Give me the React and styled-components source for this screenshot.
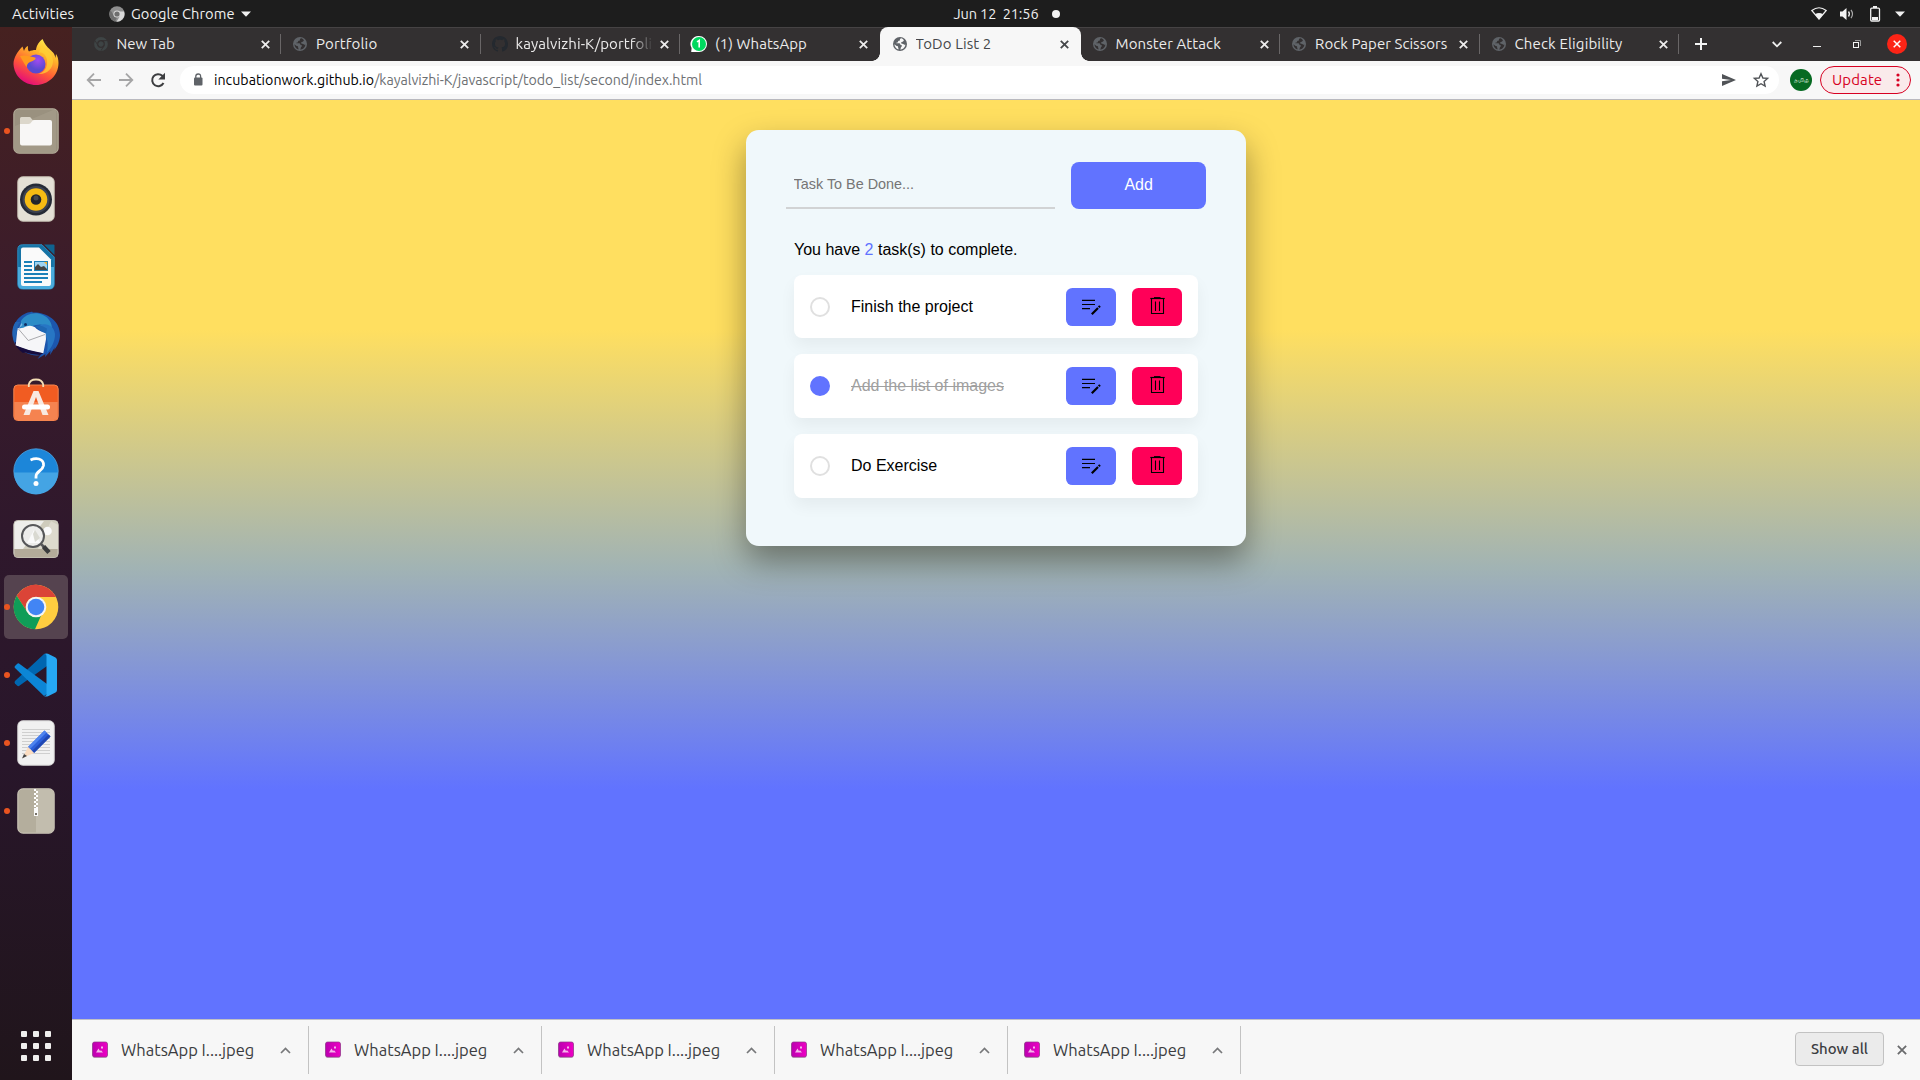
import React from "react";
import styled, { createGlobalStyle } from "styled-components";

const UI = `Ubuntu, "Noto Sans", "Open Sans", sans-serif`;

const Global = createGlobalStyle`
  *, *::before, *::after { box-sizing: border-box; }
  html, body { margin: 0; padding: 0; }
  body { width: 1920px; height: 1080px; overflow: hidden; font-family: ${UI}; }
  svg { display: block; flex: none; overflow: visible; }
`;

const Desktop = styled.div`
  width: 1920px;
  height: 1080px;
  display: flex;
  flex-direction: column;
  background: #1d1d1d;
`;

const Text = styled.span`
  font-family: ${UI};
  font-size: ${(p) => p.$size || 15}px;
  letter-spacing: ${(p) => p.$track || 0}px;
  color: ${(p) => p.$color || "inherit"};
  font-weight: ${(p) => p.$weight || 400};
  white-space: pre;
  line-height: 20px;
`;

/* ---------- system bar ---------- */
const TopBar = styled.header`
  height: 27px;
  flex: none;
  display: grid;
  grid-template-columns: 1fr auto 1fr;
  align-items: center;
  padding: 0 13px 0 12px;
  color: #f0f0f0;
`;
const TopLeft = styled.div`
  display: flex;
  align-items: center;
`;
const AppMenu = styled.div`
  display: flex;
  align-items: center;
  gap: 6px;
  margin-left: 35px;
`;
const Clock = styled.div`
  display: flex;
  align-items: center;
  gap: 13px;
  margin-left: 94px;
`;
const Dot = styled.i`
  width: 8px;
  height: 8px;
  border-radius: 50%;
  background: #f2f2f2;
`;
const Tray = styled.div`
  display: flex;
  align-items: center;
  justify-content: flex-end;
  gap: 12px;
  padding-right: 2px;
`;

const Body = styled.div`
  flex: 1;
  display: flex;
  min-height: 0;
`;

/* ---------- dock ---------- */
const Dock = styled.nav`
  width: 72px;
  flex: none;
  padding: 2px 0 12px;
  display: flex;
  flex-direction: column;
  background: linear-gradient(#462120 0, #3b1c2b 25%, #2f182c 48%, #28162a 70%, #20151b 100%);
`;
const DockItem = styled.div`
  height: 68px;
  display: grid;
  grid-template-columns: 4px 64px 4px;
  align-items: center;
  position: relative;
  &::before {
    content: "";
    position: absolute;
    left: 4px;
    top: 31px;
    width: 6px;
    height: 6px;
    border-radius: 50%;
    background: ${(p) => (p.$running ? "#e95420" : "transparent")};
  }
`;
const DockTile = styled.div`
  grid-column: 2;
  height: 64px;
  border-radius: 5px;
  display: flex;
  align-items: center;
  justify-content: center;
  background: ${(p) => (p.$active ? "#55434f" : "transparent")};
`;
const AppGrid = styled.div`
  margin: auto auto 7px;
  display: grid;
  grid-template-columns: repeat(3, 6px);
  grid-auto-rows: 6px;
  gap: 6px;
  i { background: #f0efee; border-radius: 1px; }
`;

/* ---------- browser ---------- */
const Browser = styled.main`
  flex: 1;
  display: flex;
  flex-direction: column;
  min-width: 0;
`;
const TabStrip = styled.div`
  height: 34px;
  flex: none;
  display: flex;
  align-items: center;
  background: #333031;
  box-shadow: inset 0 1px #464344;
  padding: 0 3px 0 9.5px;
  color: #ecebeb;
`;
const Tab = styled.div`
  width: 199.5px;
  height: 34px;
  flex: none;
  display: flex;
  align-items: center;
  padding: 0 11.5px 0 11px;
  position: relative;
  ${(p) => p.$divider && `
    background: linear-gradient(#696667, #696667) right center / 1px 20px no-repeat;
  `}
  ${(p) => p.$active && `
    background: #f7f7f7;
    color: #45474a;
    border-radius: 8px 8px 0 0;
    width: 201px;
    padding-left: 12px;
    &::before, &::after {
      content: "";
      position: absolute;
      bottom: 0;
      width: 8px;
      height: 8px;
    }
    &::before { left: -8px; background: radial-gradient(circle at 0 0, transparent 7.5px, #f7f7f7 8px); }
    &::after { right: -8px; background: radial-gradient(circle at 100% 0, transparent 7.5px, #f7f7f7 8px); }
  `}
`;
const TabTitle = styled.div`
  flex: 1;
  min-width: 0;
  overflow: hidden;
  margin: 0 5px 0 8px;
  line-height: 20px;
  display: flex;
  ${(p) => p.$fade && `
    -webkit-mask-image: linear-gradient(90deg, #000 115px, transparent 137px);
    mask-image: linear-gradient(90deg, #000 115px, transparent 137px);
  `}
`;
const PlusSlot = styled.div`
  width: 44px;
  display: flex;
  justify-content: center;
`;
const WindowButtons = styled.div`
  margin-left: auto;
  display: grid;
  grid-template-columns: repeat(4, 40px);
  justify-items: center;
  align-items: center;
`;
const CloseWindow = styled.div`
  width: 20px;
  height: 20px;
  border-radius: 50%;
  background: #fc2416;
  display: flex;
  align-items: center;
  justify-content: center;
`;

const Toolbar = styled.div`
  height: 39px;
  flex: none;
  display: flex;
  align-items: center;
  background: #f7f7f7;
  border-bottom: 1px solid #b9b9bf;
  padding: 0 9px 0 13px;
`;
const NavButtons = styled.div`
  display: flex;
  gap: 14px;
  margin-right: 13px;
`;
const Omnibox = styled.div`
  width: 1599px;
  height: 28px;
  border-radius: 14px;
  background: #fff;
  display: flex;
  align-items: center;
  padding: 0 9px 0 9px;
`;
const Address = styled.div`
  margin-left: 7px;
  flex: 1;
  display: flex;
`;
const OmniActions = styled.div`
  display: flex;
  gap: 14px;
`;
const Avatar = styled.div`
  width: 22px;
  height: 22px;
  border-radius: 50%;
  background: #066a22;
  margin: 0 8px 0 11px;
  display: flex;
  align-items: center;
  justify-content: center;
`;
const UpdatePill = styled.div`
  width: 91px;
  height: 28px;
  border-radius: 14px;
  border: 1px solid #d70022;
  background: #faeaeb;
  color: #d70022;
  display: flex;
  align-items: center;
  justify-content: space-between;
  padding: 0 10px 0 11px;
`;

/* ---------- todo page ---------- */
const Page = styled.section`
  flex: 1;
  min-height: 0;
  padding-top: 30px;
  display: flex;
  justify-content: center;
  align-items: flex-start;
  background: linear-gradient(#ffdf60 25%, #a1b3b4 51%, #6173ff 75%);
  font-family: "Liberation Sans", Arial, sans-serif;
`;
const Card = styled.div`
  width: 500px;
  height: 416px;
  padding: 32px 40px;
  background: #f0f8fb;
  border-radius: 12.8px;
  box-shadow: 0 15px 32px rgba(0, 0, 0, 0.38);
`;
const NewTask = styled.div`
  display: grid;
  grid-template-columns: 8fr 4fr;
  gap: 16px;
  height: 47px;
`;
const Field = styled.input`
  font: 14.4px "Liberation Sans", Arial, sans-serif;
  min-width: 0;
  background: transparent;
  border: 0;
  border-bottom: 2px solid #d1d3d4;
  border-radius: 0;
  outline: none;
  padding: 0 7.6px 1px;
  &::placeholder { color: #757575; opacity: 1; }
`;
const AddButton = styled.button`
  font: 16px "Liberation Sans", Arial, sans-serif;
  border: 0;
  border-radius: 8px;
  background: #6173ff;
  color: #fff;
  padding: 0 0 1px;
`;
const Tasks = styled.div`
  padding: 0 8px;
  margin-top: 32px;
`;
const Count = styled.p`
  margin: 0 0 15.8px;
  font-size: 16px;
  line-height: 18px;
  b { font-weight: 400; color: #6173ff; }
`;
const TaskRow = styled.div`
  height: 63.6px;
  margin-bottom: 16px;
  padding: 0 16px;
  display: grid;
  grid-template-columns: 20px 1fr 50px 50px;
  column-gap: 16px;
  align-items: center;
  background: #fff;
  border-radius: 8px;
  box-shadow: 0 8px 16px rgba(0, 0, 0, 0.05);
`;
const Check = styled.span`
  width: 20px;
  height: 20px;
  border-radius: 50%;
  border: 2px solid ${(p) => (p.$done ? "#6173ff" : "#e0e0e0")};
  background: ${(p) => (p.$done ? "#6173ff" : "transparent")};
`;
const TaskName = styled.span`
  font-size: 16px;
  line-height: 18px;
  margin-left: 5px;
  padding-top: 0.2px;
  color: ${(p) => (p.$done ? "#a0a0a0" : "#000")};
  text-decoration: ${(p) => (p.$done ? "line-through" : "none")};
`;
const RowButton = styled.button`
  height: 38px;
  border: 0;
  padding: 0 0 2px;
  border-radius: 6.4px;
  display: flex;
  align-items: center;
  justify-content: center;
  background: ${(p) => (p.$danger ? "#ff0058" : "#6173ff")};
`;

/* ---------- downloads ---------- */
const Shelf = styled.footer`
  height: 61px;
  flex: none;
  display: flex;
  align-items: center;
  background: #f7f7f7;
  border-top: 1px solid #c1c1c6;
  padding: 0 13px 0 4px;
  color: #3b3c40;
`;
const Download = styled.div`
  width: 233px;
  height: 48px;
  display: flex;
  align-items: center;
  padding: 0 17.5px 0 16px;
  border-right: 1px solid #c3c3c3;
`;
const FileName = styled.div`
  flex: 1;
  display: flex;
  margin-left: 13px;
`;
const ShowAll = styled.div`
  margin: 0 13px 2px auto;
  width: 89px;
  height: 34px;
  border: 1px solid #c2c2c2;
  border-radius: 4px;
  background: #ebebeb;
  display: flex;
  align-items: center;
  justify-content: center;
`;
const CloseShelf = styled.div`
  padding-bottom: 1px;
`;

/* ---------- icons ---------- */
const Cross = ({ s = 8, w = 2, color = "currentColor" }) => (
  <svg width={s} height={s} viewBox="0 0 8 8">
    <path d="M.7.7l6.6 6.6M7.3.7L.7 7.3" stroke={color} strokeWidth={(w * 8) / s} fill="none" />
  </svg>
);
const Caret = () => (
  <svg width="10" height="6" viewBox="0 0 10 6"><path d="M0 .5h10L5 5.7z" fill="#f0f0f0" /></svg>
);
const Globe = ({ dim }) => (
  <svg width="16" height="16" viewBox="0 0 16 16">
    <circle cx="8" cy="8" r="7" fill="#5f6368" />
    <path
      d="M9.3 2.3c-.9.3-1.5.7-1.4 1.4.3.7-.4 1-1.2 1.1-.8.2-.6 1-.9 1.4-.3.4-1.4.1-1.6.8.1.5 1.2.3 2.2.3 1.3 0 2 .5 2 1.4.2.7 1.3.1 1.5 1 .1.9-.8 1-1 1.7-.2.8-.2 1.5-.9 2.2 3 .1 5.2-2.1 5.4-5-.9.3-1.7.3-2-.5-.4-.7-1.4-.1-2-.7-.6-.8.1-1.5.9-1.7 1-.1.9-.8 1.6-1.3-.7-1.1-1.5-1.7-2.6-2.1zM2.4 8.3c.1 2.5 1.7 4.5 4 5.1.3-.8-.1-1.4-.3-2 .3-.8-.4-1.5-1.3-1.5-.8-.1-1.500-.8-2.400-1.600z"
      fill={dim ? "#333031" : "#f7f7f7"}
    />
  </svg>
);
const ChromeMono = ({ a = "#8f8f8f", b = "#d9d9d9", c = "#6e6e6e", size = 16 }) => (
  <svg width={size} height={size} viewBox="0 0 16 16">
    <circle cx="8" cy="8" r="7.800" fill={a} />
    <path d="M15 5.500H8l3 4.500-3.500 5.800A7.800 7.800 0 0 0 15 5.500z" fill={b} />
    <path d="M1.500 4L5 10l3 1.500-2 4A7.800 7.800 0 0 1 1.500 4z" fill={c} />
    <circle cx="8" cy="8" r="3.600" fill={b} />
    <circle cx="8" cy="8" r="2.600" fill={c} />
  </svg>
);
const DimChrome = () => (
  <svg width="16" height="16" viewBox="0 0 16 16" fill="none" stroke="#3e4445">
    <circle cx="8" cy="8" r="5.400" strokeWidth="3" />
    <circle cx="8" cy="8" r="2.200" fill="#3e4445" />
    <path d="M8 4.600h6M5 9.500L2 4.500M11 9.700l-3 5" stroke="#333031" strokeWidth=".9" />
  </svg>
);
const GitHub = () => (
  <svg width="16" height="16" viewBox="0 0 16 16">
    <path fill="#24292f" d="M8 0C3.580 0 0 3.580 0 8c0 3.540 2.290 6.530 5.470 7.590.4.070.55-.17.55-.38 0-.19-.01-.82-.01-1.490-2.010.37-2.530-.49-2.690-.94-.09-.23-.48-.94-.82-1.130-.28-.15-.68-.52-.01-.53.63-.01 1.080.58 1.230.82.72 1.210 1.870.87 2.330.66.070-.52.28-.87.51-1.070-1.780-.2-3.640-.89-3.640-3.950 0-.87.31-1.590.82-2.150-.08-.2-.36-1.020.08-2.120 0 0 .67-.21 2.200.82.64-.18 1.320-.27 2-.27s1.360.09 2 .27c1.530-1.040 2.200-.82 2.200-.82.44 1.100.16 1.920.08 2.120.51.56.82 1.270.82 2.150 0 3.070-1.870 3.750-3.650 3.950.29.25.54.73.54 1.480 0 1.070-.01 1.930-.01 2.200 0 .21.15.46.55.38A8.010 8.010 0 0 0 16 8c0-4.420-3.580-8-8-8z" />
  </svg>
);
const WhatsApp = () => (
  <svg width="16" height="16" viewBox="0 0 16 16">
    <path d="M8 0a8 8 0 0 1 0 16H.2L.6 12A8 8 0 0 1 8 0z" fill="#fff" />
    <circle cx="8" cy="8" r="7" fill="#00d95f" />
    <path d="M6 5.800l2.200-1.400V11.600" fill="none" stroke="#fff" strokeWidth="1.600" />
  </svg>
);

const dockIcons = {
  firefox: (
    <svg width="46" height="46" viewBox="0 1 46 46">
      <defs>
        <linearGradient id="ffa" x1=".8" y1="0" x2=".3" y2="1">
          <stop offset="0" stopColor="#fff44f" /><stop offset=".35" stopColor="#ffb02a" />
          <stop offset=".65" stopColor="#ff5a36" /><stop offset="1" stopColor="#e3077e" />
        </linearGradient>
        <radialGradient id="ffb" cx=".6" cy=".3"><stop offset="0" stopColor="#a14bf0" /><stop offset="1" stopColor="#5a4ad0" /></radialGradient>
      </defs>
      <path d="M29.500 0c-3 2.500-6 6-6.500 11-3 0-5 .5-7 1.500C14.500 11 15 8.500 15 7c-2 .8-3.500 3-4 5L9.500 7.500C5 12 .5 18.500.5 25 1 37 11 46 23 46s22.500-9.500 22.500-22c0-4-1-7-2.500-9l-.5 4c-1-5-3.500-6.500-6-9-2.500-2.300-5-5-7-10z" fill="url(#ffa)" />
      <circle cx="23" cy="25" r="9.500" fill="url(#ffb)" />
      <path d="M7 17c5-1.500 9 0 15 1.500 2 1.500-1 3-5 4.500-2.500 1-3 3-3.500 5C11 24 9 21 7 17z" fill="#ff9a1f" />
      <path d="M26 14c4-2 9 4 8 11-.5 5-4 9-9 10 8 1 15-5 15-13C40 12 30 12 29 5c-1 3-2 5-3 9z" fill="#ffd034" opacity=".75" />
    </svg>
  ),
  files: (
    <svg width="46" height="46" viewBox="0 0 46 46">
      <rect x=".8" y=".8" width="44.400" height="44.400" rx="5" fill="#9a917f" stroke="#b9b29f" strokeWidth="1" />
      <path d="M2 18L40 2h3v42H2z" fill="#aaa290" opacity=".5" />
      <path d="M7 10.500q0-1.500 1.500-1.500h8q1 0 1.500 1l1.500 2H24v8H7z" fill="#dcd7cb" />
      <path d="M7 16h8.500q2 0 3-2t3-2H37q2 0 2 2v21.500q0 2-2 2H9q-2 0-2-2z" fill="#f8f7f6" />
    </svg>
  ),
  music: (
    <svg width="38" height="46" viewBox="0 0 38 46">
      <rect x=".8" y=".8" width="36.400" height="44.400" rx="5" fill="#e4e0d6" stroke="#c9c4b6" />
      <circle cx="19" cy="23.500" r="16" fill="#252a36" /><circle cx="19" cy="23.500" r="13.500" fill="#3d4352" />
      <circle cx="19" cy="23.500" r="11.300" fill="#f6bb13" /><circle cx="19" cy="23.500" r="5.300" fill="#23252c" /><circle cx="19" cy="22" r="2.500" fill="#45484d" />
    </svg>
  ),
  writer: (
    <svg width="38" height="46" viewBox="0 0 38 46">
      <path d="M5.500.8H25L37.200 13v27q0 5-5 5H5.500q-4.700 0-4.700-5V5.500Q.8.8 5.500.8z" fill="#1673a5" stroke="#2b8cc0" />
      <path d="M1 23h36v17q0 5-5 5H6q-5 0-5-5z" fill="#4aabdc" />
      <path d="M27 .5h9.500q1 0 1 1V11z" fill="#0f638f" />
      <path d="M6 3.500h16L34 15.500V39q0 3-2 3H6q-2 0-2-2V5.500q0-2 2-2z" fill="#fafafa" />
      <path d="M7 18h8M7 22h8M7 26h8M7 30h24M7 34h24M7 38h18" stroke="#1b80b8" strokeWidth="2" />
      <rect x="17" y="17" width="14" height="10" fill="#1b80b8" /><rect x="18" y="18" width="12" height="8" fill="#9ed3f1" /><path d="M18 26v-3l3-3 3 3 3-1 3 3v1z" fill="#454545" /><path d="M27 18h3v3z" fill="#fbb32b" />
    </svg>
  ),
  mail: (
    <svg width="48" height="48" viewBox="0 0 48 48">
      <path d="M5 9C9 4 15 1 19 1c1-.8 2 0 1.500.5C34 1 48 9 48 24c0 6-3 12-6 15l1-3-5 8 .5-4L33 46l.5-3-8 5 3-4C20 46 8 40 3 33-1 26 0 16 5 9z" fill="#1c56ad" />
      <path d="M9 10C13 3 23 0 31 4c6 3 9 8 9 14-7-2-8-6-16-4-6 1-11 6-16 7z" fill="#2c8cc7" />
      <path d="M27 15c6-4 15-1 16 8 0 8-4 14-8 19 1-7 1-12-1-16z" fill="#2776c4" />
      <path d="M3.700 31Q9 38 14 41l-3 1Q5 38 3 32z" fill="#170c3c" />
      <path d="M5.500 17q5 1 8.500-1.500 5-2 9 .8 2 3 10.700 6l.3 6-2.700 14Q15 40 3.700 34.500z" fill="#f6f6f8" />
      <path d="M3.700 34.500Q17 40 31.300 42.300L28 44Q12 43 4.500 36z" fill="#170c3c" />
      <path d="M6.500 18l9.800 11.500L33 23.500" fill="none" stroke="#a9a9ad" strokeWidth="1" />
      <path d="M23 15q5 5 11 7.500l1-5q-6-4-12-2.500z" fill="#1f68b4" />
      <circle cx="13.500" cy="13.500" r="1.500" fill="#102e63" /><path d="M10.500 14l-4 4 3-6z" fill="#77b9e6" />
      <path d="M3.500 11C-1 17 0 26 2.500 31l3-13c-.5-3 1-5 3-7z" fill="#2265b5" />
    </svg>
  ),
  software: (
    <svg width="46" height="46" viewBox="0 3 46 46">
      <rect x=".8" y="8" width="44.400" height="35.500" rx="4" fill="#f15c22" stroke="#f5854f" />
      <path d="M1.300 25h43.400v14.500q0 3.500-4 3.500H5q-3.700 0-3.700-3.500z" fill="#f58350" />
      <path d="M15.800 10V7.500q1-5 7.200-5t7.200 5V10" fill="none" stroke="#f5deb5" strokeWidth="1.800" />
      <path d="M20.500 14h5L35.500 38h-6L23 20l-6.500 18h-6z" fill="#f8e9e1" /><rect x="9" y="27.500" width="28" height="5" rx="2.500" fill="#fff" />
    </svg>
  ),
  help: (
    <svg width="46" height="46" viewBox="0 0 46 46">
      <circle cx="23" cy="23" r="22.200" fill="#1c86d9" stroke="#4d9fdc" strokeWidth=".8" />
      <path d="M1 24.500h44A22 22 0 0 1 1 24.500z" fill="#44a4e4" />
      <path d="M17.500 12q4.500-2 8.500-1 5 1.500 4.500 6.500-.5 3-4 5.500-3.500 2.500-3.500 6v1.500" fill="none" stroke="#fff" strokeWidth="2.800" /><circle cx="23" cy="35.500" r="2.500" fill="#fff" />
    </svg>
  ),
  viewer: (
    <svg width="46" height="46" viewBox="0 0 46 46">
      <rect x=".8" y="4.500" width="44.400" height="37" rx="4" fill="#eeeeea" stroke="#c5c2b5" />
      <path d="M31 5h10q4 0 4 4v24H10z" fill="#cfccbc" /><path d="M38 5l7 4v24H25z" fill="#dddacd" />
      <path d="M1.300 33h43.400v5q0 3.200-4 3.200H5q-3.700 0-3.700-3.200z" fill="#b3ab99" />
      <circle cx="34.500" cy="15" r="4.300" fill="#fafafa" />
      <circle cx="20" cy="20" r="11" fill="#ededeb" stroke="#57585a" strokeWidth="2" /><path d="M14 27l7-13 6 13z" fill="#fafafa" /><path d="M20 18l2 8 5-4-5-8z" fill="#d9d9d1" />
      <path d="M28 28l3.500 3.500" stroke="#57585a" strokeWidth="2.500" /><path d="M30.500 30.500l5.500 6" stroke="#3a3b3d" strokeWidth="4.500" />
    </svg>
  ),
  chrome: (
    <svg width="46" height="46" viewBox="0 0 46 46">
      <circle cx="23" cy="23" r="22.300" fill="#ffcd40" />
      <path d="M3.700 11.800A22.300 22.300 0 0 1 43 13H23a10 10 0 0 0-8.700 15z" fill="#db4437" />
      <path d="M3.700 11.800L14.300 28A10 10 0 0 0 28 31.700L22 45.300A22.300 22.300 0 0 1 3.700 11.800z" fill="#0f9d58" />
      <circle cx="23" cy="23" r="10.300" fill="#f4f4f4" /><circle cx="23" cy="23" r="8.300" fill="#4285f4" />
    </svg>
  ),
  code: (
    <svg width="44" height="44" viewBox="0 0 44 44">
      <path d="M1 28L30 1h3v12L5 33q-1 .5-2-.5l-2-2q-1-1.300 0-2.500z" fill="#0066b0" />
      <path d="M1 15L30 43l3-2V31L5 10.500q-1-.5-2 .5l-2 2q-1 1 0 2z" fill="#0c86d6" />
      <path d="M30 1q2-1 4-.2L41.500 4.500q1.500 1 1.500 2.500v30q0 1.500-1.500 2.500L34 43.200q-2 .8-4-.2 2.500.5 2.500-2V3q0-2.500-2.500-2z" fill="#26a8f3" />
    </svg>
  ),
  editor: (
    <svg width="38" height="46" viewBox="0 0 38 46">
      <rect x=".8" y=".8" width="36.400" height="44.400" rx="5" fill="#f1f1f1" stroke="#d8d8d8" />
      <path d="M5 9.500h28M5 12.500h28M5 15.500h28M5 18.500h28M5 21.500h28M5 24.500h28M5 27.500h28M5 30.500h28M5 33.500h28" stroke="#cfcfcf" />
      <path d="M11 27L27.500 10.500l6 6L17 33z" fill="#2b5fd9" /><path d="M11 27L27.500 10.500l2 2L13 29z" fill="#4d83ef" /><path d="M15 31l16.500-16.500 2 2L17 33z" fill="#1f47b3" />
      <path d="M11 27l6 6-11.500 5z" fill="#fbdcc0" /><path d="M7 34l3 2-5 2.500z" fill="#444" />
    </svg>
  ),
  archive: (
    <svg width="38" height="46" viewBox="0 0 38 46">
      <rect x=".8" y=".8" width="36.400" height="44.400" rx="5" fill="#b4ae9d" stroke="#cfcabc" />
      <path d="M19 1.500h13q5 0 5 4.500v34q0 4.700-5 4.700H19z" fill="#c2bdae" />
      <path d="M18 1v20" stroke="#fff" strokeWidth="2" strokeDasharray="2 2" /><path d="M20 3v20" stroke="#fff" strokeWidth="2" strokeDasharray="2 2" />
      <rect x="17" y="20" width="4" height="8" fill="#fafafa" /><rect x="18" y="25" width="2" height="2" fill="#77736a" />
    </svg>
  ),
};

const dock = [
  ["firefox"], ["files", true], ["music"], ["writer"], ["mail"], ["software"], ["help"], ["viewer"],
  ["chrome", true, true], ["code", true], ["editor", true], ["archive", true],
];

const tabs = [
  { title: "New Tab", track: 0, icon: <DimChrome />, divider: true },
  { title: "Portfolio", track: 0.15, icon: <Globe dim />, divider: true },
  { title: "kayalvizhi-K/portfolio", track: 0.1, icon: <GitHub />, divider: true, fade: true },
  { title: "(1) WhatsApp", track: 0.06, icon: <WhatsApp /> },
  { title: "ToDo List 2", track: 0.1, icon: <Globe />, active: true },
  { title: "Monster Attack", track: 0.1, icon: <Globe dim />, divider: true },
  { title: "Rock Paper Scissors", track: 0.06, icon: <Globe dim />, divider: true },
  { title: "Check Eligibility", track: 0.15, icon: <Globe dim />, divider: true },
];

const tasks = [
  { name: "Finish the project" },
  { name: "Add the list of images", done: true },
  { name: "Do Exercise" },
];

const EditIcon = () => (
  <svg width="20" height="18" viewBox="0 0 20 18">
    <path d="M1 3.300H14M1 7.500H14M1 11.700h8" stroke="#000" strokeWidth="1.200" />
    <path d="M10.800 17.200L17 11" stroke="#000" strokeWidth="2.200" /><path d="M17.600 8.800l1.500 1.500" stroke="#000" strokeWidth="1.800" />
  </svg>
);
const TrashIcon = () => (
  <svg width="16" height="18" viewBox="0 0 16 18" fill="none" stroke="#000">
    <path d="M1.300 1.500h14.400" strokeWidth="1.200" /><path d="M5 .7h6.500" strokeWidth="1.200" />
    <path d="M2.500 2v14.500h12V2" strokeWidth="1.100" /><path d="M6.500 4.500v9.500M10.500 4.500v9.500" strokeWidth="1.100" />
  </svg>
);
const ImageFile = () => (
  <svg width="16" height="18" viewBox="0 0 16 18">
    <defs><linearGradient id="img"><stop offset="0" stopColor="#bb00b0" /><stop offset="1" stopColor="#ee00c4" /></linearGradient></defs>
    <rect x=".5" y="1.500" width="15" height="15.500" rx="2" fill="#c9b9c7" />
    <rect x=".5" y="1" width="15" height="15" rx="2" fill="url(#img)" stroke="#8d3687" strokeWidth=".7" />
    <path d="M4 11.500l2.500-4 1.500 2.500 1-.8 2 2.300z" fill="#f5b6ec" /><rect x="9" y="5.500" width="2" height="2" fill="#f5b6ec" />
  </svg>
);

export default function App() {
  return (
    <Desktop>
      <Global />
      <TopBar>
        <TopLeft>
          <Text $track={0.05}>Activities</Text>
          <AppMenu>
            <ChromeMono />
            <Text $size={14.67} $track={0.06}>Google Chrome</Text>
            <Caret />
          </AppMenu>
        </TopLeft>
        <Clock>
          <Text $size={14.5} $track={-0.1}>{"Jun 12  21:56"}</Text>
          <Dot />
        </Clock>
        <Tray>
          <svg width="16" height="13" viewBox="0 0 16 13">
            <path d="M.8 3.500Q8-2 15.200 3.500L8 12z" fill="none" stroke="#eee" strokeWidth="1.200" /><path d="M4 7.300q4-2.500 8 0L8 12.500z" fill="#f2f2f2" />
          </svg>
          <svg width="16" height="14" viewBox="0 0 16 14">
            <path d="M1 4.500h2.500L7.500 1v12L3.500 9.500H1z" fill="#f2f2f2" /><path d="M9.500 4.500q1.800 2.500 0 5" fill="none" stroke="#eee" strokeWidth="1.300" /><path d="M12 2.800q3 4.200 0 8.400" fill="none" stroke="#aaa" strokeWidth="1.200" />
          </svg>
          <svg width="16" height="16" viewBox="0 0 16 16">
            <rect x="3.700" y="2.200" width="8.800" height="12.800" rx="1" fill="none" stroke="#f2f2f2" strokeWidth="1.300" /><path d="M6 1h4" stroke="#f2f2f2" strokeWidth="2" /><rect x="5" y="11" width="6" height="3" fill="#f2f2f2" />
          </svg>
          <Caret />
        </Tray>
      </TopBar>
      <Body>
        <Dock>
          {dock.map(([name, running, active]) => (
            <DockItem key={name} $running={running}>
              <DockTile $active={active}>{dockIcons[name]}</DockTile>
            </DockItem>
          ))}
          <AppGrid>{Array.from({ length: 9 }, (_, i) => <i key={i} />)}</AppGrid>
        </Dock>
        <Browser>
          <TabStrip>
            {tabs.map((t) => (
              <Tab key={t.title} $active={t.active} $divider={t.divider}>
                {t.icon}
                <TabTitle $fade={t.fade}><Text $track={t.track}>{t.title}</Text></TabTitle>
                <Cross s={9} w={1.8} />
              </Tab>
            ))}
            <PlusSlot>
              <svg width="12" height="12" viewBox="0 0 12 12"><path d="M6 0v12M0 6h12" stroke="#f4f4f4" strokeWidth="2" /></svg>
            </PlusSlot>
            <WindowButtons>
              <svg width="10" height="7" viewBox="0 0 10 7"><path d="M.7 1L5 5.300 9.300 1" fill="none" stroke="#eee" strokeWidth="1.800" /></svg>
              <svg width="8" height="8" viewBox="0 0 8 8"><path d="M0 6.500h8" stroke="#eee" /></svg>
              <svg width="8" height="8" viewBox="0 0 8 8" fill="none"><path d="M2 .5h5.500V6" stroke="#999" /><rect x=".5" y="2.500" width="5" height="5" stroke="#f4f4f4" /></svg>
              <CloseWindow><Cross s={8} w={1.5} color="#fff" /></CloseWindow>
            </WindowButtons>
          </TabStrip>
          <Toolbar>
            <NavButtons>
              <svg width="18" height="18" viewBox="0 0 18 18" fill="none" stroke="#a5a5a6" strokeWidth="1.800"><path d="M16 9H3M9 2.700L2.700 9 9 15.300" /></svg>
              <svg width="18" height="18" viewBox="0 0 18 18" fill="none" stroke="#a5a5a6" strokeWidth="1.800"><path d="M2 9h13M9 2.700L15.300 9 9 15.300" /></svg>
              <svg width="18" height="18" viewBox="0 0 18 18"><path d="M14.500 12A6 6 0 1 1 13.300 4.800L15 6.500" fill="none" stroke="#3c3d40" strokeWidth="2" /><path d="M16 1.800v6.700H9.300z" fill="#3c3d40" /></svg>
            </NavButtons>
            <Omnibox>
              <svg width="18" height="16" viewBox="0 0 18 16"><rect x="5" y="5.500" width="8.500" height="8" rx="1" fill="#5f6368" /><path d="M6.800 6V4.300q0-2.300 2.400-2.300t2.400 2.300V6" fill="none" stroke="#5f6368" strokeWidth="1.300" /></svg>
              <Address>
                <Text $size={14.2} $track={0.03} $color="#000">incubationwork.github.io</Text>
                <Text $size={14.2} $track={-0.04} $color="#6d7073">/kayalvizhi-K/javascript/todo_list/second/index.html</Text>
              </Address>
              <OmniActions>
                <svg width="18" height="18" viewBox="0 0 18 18"><path d="M2 3l14 6-14 6v-4.800L11 9 2 7.800z" fill="#505357" /></svg>
                <svg width="18" height="18" viewBox="0 0 18 18"><path d="M9 2.700l1.900 4.300 4.700.4-3.500 3.100 1 4.600L9 12.700l-4.100 2.400 1-4.600L2.400 7.400l4.700-.4z" fill="none" stroke="#505357" strokeWidth="1.400" /></svg>
              </OmniActions>
            </Omnibox>
            <Avatar>
              <Text $size={6} $color="#e6f5e9">தமிழ்</Text>
            </Avatar>
            <UpdatePill>
              <Text $track={0.1}>Update</Text>
              <svg width="4" height="14" viewBox="0 0 4 14" fill="#d70022"><circle cx="2" cy="2" r="1.600" /><circle cx="2" cy="7" r="1.600" /><circle cx="2" cy="12" r="1.600" /></svg>
            </UpdatePill>
          </Toolbar>
          <Page>
            <Card>
              <NewTask>
                <Field placeholder="Task To Be Done..." />
                <AddButton>Add</AddButton>
              </NewTask>
              <Tasks>
                <Count>You have <b>2</b> task(s) to complete.</Count>
                {tasks.map((t) => (
                  <TaskRow key={t.name}>
                    <Check $done={t.done} />
                    <TaskName $done={t.done}>{t.name}</TaskName>
                    <RowButton><EditIcon /></RowButton>
                    <RowButton $danger><TrashIcon /></RowButton>
                  </TaskRow>
                ))}
              </Tasks>
            </Card>
          </Page>
          <Shelf>
            {[0, 1, 2, 3, 4].map((i) => (
              <Download key={i}>
                <ImageFile />
                <FileName><Text $size={16.5}>WhatsApp I....jpeg</Text></FileName>
                <svg width="11" height="7" viewBox="0 0 11 7"><path d="M1 6l4.500-4.500L10 6" fill="none" stroke="#77787a" strokeWidth="1.700" /></svg>
              </Download>
            ))}
            <ShowAll><Text $size={15} $weight={500}>Show all</Text></ShowAll>
            <CloseShelf><Cross s={10} w={1.8} color="#6a6b6d" /></CloseShelf>
          </Shelf>
        </Browser>
      </Body>
    </Desktop>
  );
}
